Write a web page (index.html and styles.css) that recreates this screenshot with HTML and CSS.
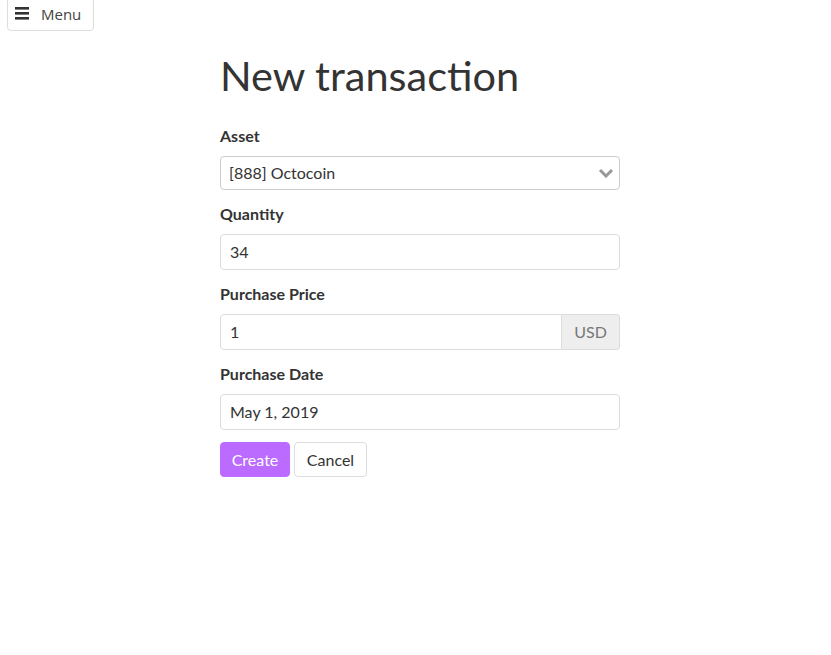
FILE: index.html
```html
<!DOCTYPE html>
<html lang="en">
<head>
    <meta charset="UTF-8">
    <meta name="viewport" content="width=device-width, initial-scale=1.0">
    <title>New transaction</title>
    <link rel="stylesheet" href="styles.css">
</head>
<body>
    <button class="menu-btn" type="button">
        <svg class="menu-icon" width="14" height="13" viewBox="0 0 14 13">
            <rect x="0" y="0" width="14" height="2.6" fill="#333"/>
            <rect x="0" y="5" width="14" height="2.6" fill="#333"/>
            <rect x="0" y="10" width="14" height="2.6" fill="#333"/>
        </svg>
        <span>Menu</span>
    </button>

    <div class="page">
        <h1>New transaction</h1>
        <form>
            <div class="form-group">
                <label for="asset">Asset</label>
                <div class="select-wrap">
                    <select id="asset" name="asset">
                        <option>[888] Octocoin</option>
                    </select>
                    <svg class="chevron" width="16" height="10" viewBox="0 0 16 10">
                        <polyline points="2,2 8,8 14,2" fill="none" stroke="#999" stroke-width="3"/>
                    </svg>
                </div>
            </div>

            <div class="form-group">
                <label for="quantity">Quantity</label>
                <input type="text" id="quantity" name="quantity" value="34">
            </div>

            <div class="form-group">
                <label for="price">Purchase Price</label>
                <div class="input-group">
                    <input type="text" id="price" name="price" value="1">
                    <span class="addon">USD</span>
                </div>
            </div>

            <div class="form-group form-group-last">
                <label for="date">Purchase Date</label>
                <input type="text" id="date" name="date" value="May 1, 2019">
            </div>

            <div class="actions">
                <button type="submit" class="btn btn-primary">Create</button>
                <button type="button" class="btn btn-default">Cancel</button>
            </div>
        </form>
    </div>
</body>
</html>
```

FILE: styles.css
```css
body {
    font-family: Lato, "Open Sans", sans-serif;
    background-color: #fff;
    color: #333;
    margin: 0;
    padding: 0;
}
.menu-btn {
    position: fixed;
    top: -5px;
    left: 7px;
    width: 87px;
    height: 36px;
    padding: 1px 0 0 7px;
    display: flex;
    align-items: center;
    gap: 12px;
    background-color: #fff;
    border: 1px solid #ddd;
    border-radius: 4px;
    font-family: "Open Sans", sans-serif;
    font-size: 15px;
    color: #444;
    cursor: pointer;
}
.menu-icon {
    display: block;
    margin-top: -1px;
}
.page {
    width: 400px;
    margin: 0 auto;
    padding: 51px 0 0 9px;
}
h1 {
    font-size: 41.5px;
    font-weight: 400;
    line-height: 1.2;
    margin: 0 0 25px 0;
    color: #333;
}
.form-group {
    margin-bottom: 14px;
}
.form-group-last {
    margin-bottom: 12px;
}
label {
    display: block;
    font-weight: bold;
    font-size: 16px;
    line-height: 20px;
    margin-bottom: 10px;
    color: #333;
}
input[type="text"],
select {
    display: block;
    width: 100%;
    height: 36px;
    padding: 0 9px;
    border: 1px solid #dcdcdc;
    border-radius: 4px;
    font-family: Lato, sans-serif;
    font-size: 16px;
    color: #333;
    background-color: #fff;
    box-sizing: border-box;
}
.select-wrap {
    position: relative;
}
select {
    height: 34px;
    padding-left: 8px;
    border-color: #ccc;
    appearance: none;
    -webkit-appearance: none;
}
.chevron {
    position: absolute;
    right: 6px;
    top: 12px;
}
.input-group {
    display: flex;
}
.input-group input[type="text"] {
    flex: 1;
    border-radius: 4px 0 0 4px;
}
.addon {
    display: flex;
    align-items: center;
    justify-content: center;
    width: 58px;
    height: 36px;
    box-sizing: border-box;
    border: 1px solid #dcdcdc;
    border-left: none;
    border-radius: 0 4px 4px 0;
    background-color: #eee;
    color: #777;
    font-size: 16px;
}
.actions {
    display: flex;
    gap: 4px;
}
.btn {
    height: 35px;
    padding: 0;
    border-radius: 4px;
    font-family: Lato, sans-serif;
    font-size: 16px;
    cursor: pointer;
}
.btn-primary {
    background-color: #bb6bff;
    border: 1px solid #bb6bff;
    color: #fff;
    width: 70px;
}
.btn-default {
    background-color: #fff;
    border: 1px solid #ddd;
    color: #333;
    width: 73px;
}
```
